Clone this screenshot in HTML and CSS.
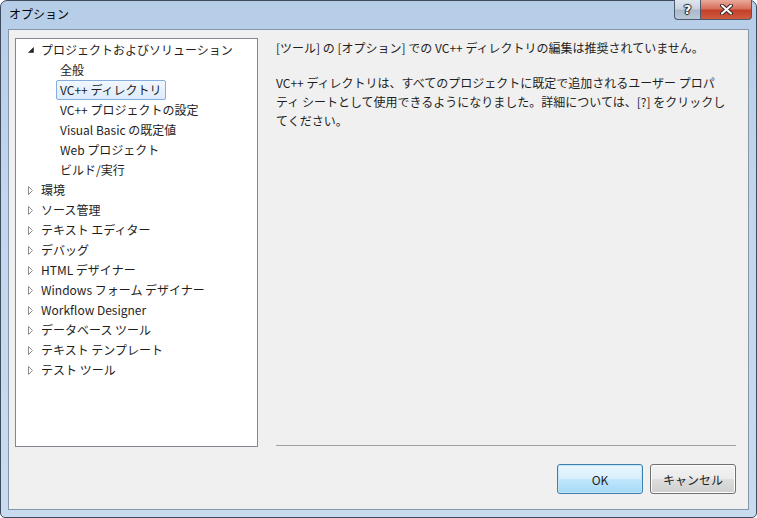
FILE: index.html
```html
<!DOCTYPE html>
<html lang="ja">
<head>
  <meta charset="UTF-8">
  <title>オプション</title>
  <link rel="stylesheet" href="styles.css">
</head>
<body>
  <div class="window">
    <div class="titlebar">
      <span class="title">オプション</span>
      <div class="caption-buttons">
        <div class="cap-btn help">?</div>
        <div class="cap-btn close">
          <svg width="13" height="11" viewBox="0 0 13 11">
            <path d="M2 1.5 L11 9.5 M11 1.5 L2 9.5" stroke="#3b2a28" stroke-width="4" stroke-linecap="round"/>
            <path d="M2 1.5 L11 9.5 M11 1.5 L2 9.5" stroke="#ffffff" stroke-width="2" stroke-linecap="round"/>
          </svg>
        </div>
      </div>
    </div>

    <div class="client">
      <div class="main">
        <div class="tree">
          <div class="row">
            <span class="toggle">
              <svg width="6" height="6" viewBox="0 0 6 6"><polygon points="5.5,0.5 5.5,5.5 0.5,5.5" fill="#262626" stroke="#262626" stroke-width="0.6"/></svg>
            </span>
            <span class="label">プロジェクトおよびソリューション</span>
          </div>
          <div class="row child"><span class="label">全般</span></div>
          <div class="row child"><span class="label selected">VC++ ディレクトリ</span></div>
          <div class="row child"><span class="label">VC++ プロジェクトの設定</span></div>
          <div class="row child"><span class="label">Visual Basic の既定値</span></div>
          <div class="row child"><span class="label">Web プロジェクト</span></div>
          <div class="row child"><span class="label">ビルド/実行</span></div>
          <div class="row"><span class="toggle closed"></span><span class="label">環境</span></div>
          <div class="row"><span class="toggle closed"></span><span class="label">ソース管理</span></div>
          <div class="row"><span class="toggle closed"></span><span class="label">テキスト エディター</span></div>
          <div class="row"><span class="toggle closed"></span><span class="label">デバッグ</span></div>
          <div class="row"><span class="toggle closed"></span><span class="label">HTML デザイナー</span></div>
          <div class="row"><span class="toggle closed"></span><span class="label">Windows フォーム デザイナー</span></div>
          <div class="row"><span class="toggle closed"></span><span class="label">Workflow Designer</span></div>
          <div class="row"><span class="toggle closed"></span><span class="label">データベース ツール</span></div>
          <div class="row"><span class="toggle closed"></span><span class="label">テキスト テンプレート</span></div>
          <div class="row"><span class="toggle closed"></span><span class="label">テスト ツール</span></div>
        </div>

        <div class="panel">
          <p>[ツール] の [オプション] での VC++ ディレクトリの編集は推奨されていません。</p>
          <p>VC++ ディレクトリは、すべてのプロジェクトに既定で追加されるユーザー プロパ<br>ティ シートとして使用できるようになりました。詳細については、[?] をクリックし<br>てください。</p>
          <div class="separator"></div>
        </div>
      </div>

      <div class="footer">
        <button class="btn default">OK</button>
        <button class="btn">キャンセル</button>
      </div>
    </div>
  </div>

  <script>
    // collapsed arrows share one hollow triangle
    document.querySelectorAll('.toggle.closed').forEach(t => {
      t.innerHTML = '<svg width="6" height="9" viewBox="0 0 6 9"><polygon points="0.5,0.5 4.5,4.5 0.5,8.5" fill="#fff" stroke="#8c8c8c" stroke-width="1"/></svg>';
    });
  </script>
</body>
</html>
```

FILE: styles.css
```css
* {
  box-sizing: border-box;
}

body {
  margin: 0;
  font-family: "Noto Sans CJK JP", "Noto Sans", sans-serif;
  font-size: 12px;
  color: #1e1e1e;
  overflow: hidden;
}

.window {
  width: 757px;
  height: 518px;
  display: flex;
  flex-direction: column;
  padding: 0 7px 7px 7px;
  border: 1px solid #3e4c5e;
  border-radius: 7px 7px 5px 5px;
  background: linear-gradient(180deg, #b6cde8 0%, #c3d6ed 40%, #c9dbef 100%);
}

.titlebar {
  height: 28px;
  display: flex;
  justify-content: space-between;
  align-items: flex-start;
}

.title {
  margin-top: 5px;
  padding-left: 1px;
  color: #000;
  line-height: 16px;
}

.caption-buttons {
  display: flex;
  margin-right: -3px;
  margin-top: -1px;
}

.cap-btn {
  height: 20px;
  display: flex;
  align-items: center;
  justify-content: center;
  border: 1px solid #4c5a6d;
  border-top: none;
}

.help {
  width: 26px;
  border-radius: 0 0 0 4px;
  border-right: none;
  background: linear-gradient(180deg, #dfe6ee 0%, #c9d3df 45%, #aab8c9 55%, #bac8d8 100%);
  color: #fff;
  font-family: "DejaVu Sans", sans-serif;
  font-weight: bold;
  font-size: 13px;
  text-shadow: 0 0 1px #1f2630, 1px 0 1px #1f2630, -1px 0 1px #1f2630, 0 1px 1px #1f2630, 0 -1px 1px #1f2630;
}

.close {
  width: 52px;
  border-radius: 0 0 4px 0;
  background: linear-gradient(180deg, #e9a99c 0%, #d8705c 45%, #c1412a 55%, #d25c3e 100%);
}

.client {
  flex: 1;
  display: flex;
  flex-direction: column;
  background: #f0f0f0;
  border: 1px solid #8596ab;
  padding: 8px 12px 0 6px;
}

.main {
  display: flex;
  gap: 18px;
  height: 409px;
}

.tree {
  width: 243px;
  background: #fff;
  border: 1px solid #828790;
  padding-top: 1px;
}

.row {
  display: flex;
  align-items: center;
  height: 20px;
  white-space: nowrap;
}

.toggle {
  width: 16px;
  margin-left: 9px;
  display: flex;
  align-items: center;
  justify-content: flex-start;
  padding-left: 3px;
}

.toggle svg {
  display: block;
}

.label {
  line-height: 18px;
}

.row.child .label {
  margin-left: 40px;
  padding: 0 3px;
  border: 1px solid transparent;
}

.label.selected {
  border-color: #84acdd !important;
  border-radius: 2px;
  background: linear-gradient(180deg, #f1f7fe 0%, #dcebfc 100%);
}

.panel {
  flex: 1;
  display: flex;
  flex-direction: column;
}

.panel p {
  margin: 0 0 16px 0;
  line-height: 19px;
  white-space: nowrap;
}

.separator {
  margin-top: auto;
  margin-bottom: 1px;
  border-top: 1px solid #a0a0a0;
}

.footer {
  display: flex;
  justify-content: flex-end;
  gap: 7px;
  padding-top: 17px;
}

.btn {
  width: 86px;
  height: 30px;
  font-family: inherit;
  font-size: 12px;
  color: #1e1e1e;
  border: 1px solid #707070;
  border-radius: 3px;
  background: linear-gradient(180deg, #f2f2f2 0%, #ebebeb 48%, #dddddd 52%, #cfcfcf 100%);
  box-shadow: inset 0 0 0 1px #fcfcfc;
  padding: 0;
}

.btn.default {
  border-color: #3c7fb1;
  background: linear-gradient(180deg, #eaf6fd 0%, #d9f0fc 48%, #bee6fd 52%, #a7d9f5 100%);
  box-shadow: inset 0 0 0 1px #c4e5f6;
}
```
